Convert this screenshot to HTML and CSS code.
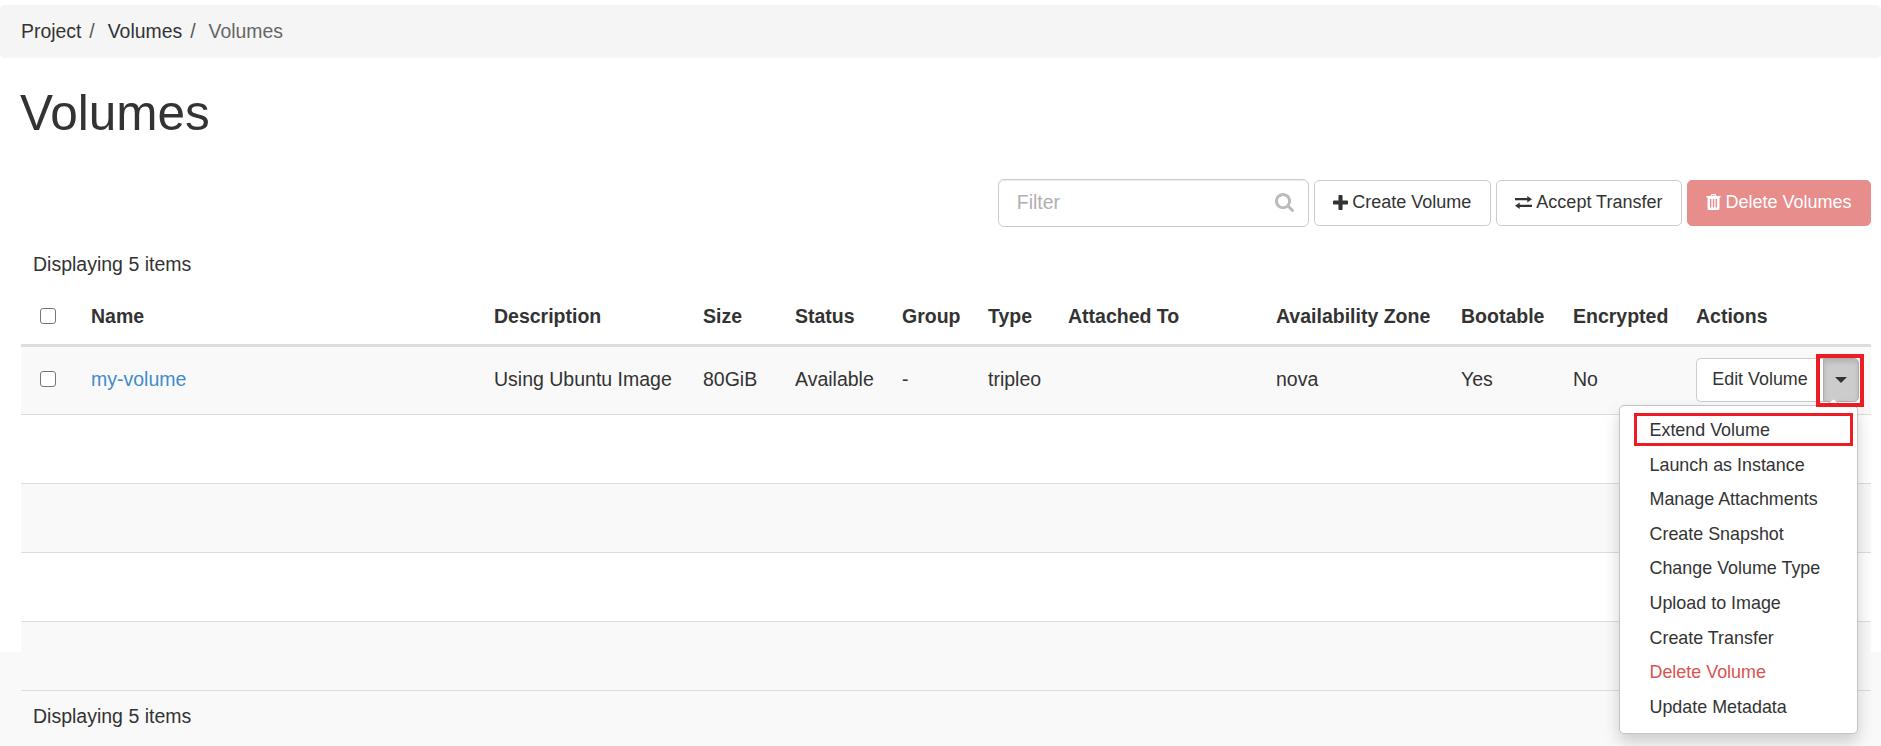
FILE: index.html
```html
<!DOCTYPE html>
<html lang="en">
<head>
  <meta charset="UTF-8">
  <title>Volumes</title>
  <link rel="stylesheet" href="styles.css">
</head>
<body>
  <div class="page">
    <ol class="breadcrumb">
      <li>Project</li>
      <li>Volumes</li>
      <li class="current">Volumes</li>
    </ol>

    <h1 class="page-title">Volumes</h1>

    <div class="toolbar">
      <div class="filter">
        <input class="filter-input" type="text" placeholder="Filter">
        <svg class="filter-icon" viewBox="0 0 1664 1664"><path d="M1152 704q0-185-131.500-316.500T704 256 387.500 387.500 256 704t131.500 316.500T704 1152t316.500-131.500T1152 704zm512 832q0 52-38 90t-90 38q-54 0-90-38l-343-342q-179 124-399 124-143 0-273.500-55.500t-225-150-150-225T0 704t55.500-273.500 150-225 225-150T704 0t273.500 55.500 225 150 150 225T1408 704q0 220-124 399l343 343q37 37 37 90z"/></svg>
      </div>
      <button class="btn">
        <svg class="icon" viewBox="0 0 1408 1408"><path d="M1408 608v192q0 40-28 68t-68 28H896v416q0 40-28 68t-68 28H608q-40 0-68-28t-28-68V896H96q-40 0-68-28T0 800V608q0-40 28-68t68-28h416V96q0-40 28-68t68-28h192q40 0 68 28t28 68v416h416q40 0 68 28t28 68z"/></svg>
        Create Volume
      </button>
      <button class="btn">
        <svg class="icon icon-wide" viewBox="0 0 18 14"><path d="M13 0l5 3.500L13 7V4.700H0V2.300h13zM5 7v2.300h13v2.400H5V14L0 10.500z"/></svg>
        Accept Transfer
      </button>
      <button class="btn btn-danger">
        <svg class="icon icon-trash" viewBox="0 0 14 16"><path fill-rule="evenodd" d="M5 0h4l1 2h4v1.500h-1V14.500q0 1.500-1.500 1.500h-9Q1 16 1 14.500V3.500H0V2h4zM5.300 2h3.400l-.5-.8H5.800zM3.500 5v8.500h1.400V5zm2.800 0v8.500h1.400V5zm2.800 0v8.500h1.400V5z"/></svg>
        Delete Volumes
      </button>
    </div>

    <table class="volumes">
      <colgroup>
        <col class="c-check"><col class="c-name"><col class="c-desc"><col class="c-size">
        <col class="c-status"><col class="c-group"><col class="c-type"><col class="c-attached">
        <col class="c-zone"><col class="c-boot"><col class="c-enc"><col class="c-actions">
      </colgroup>
      <thead>
        <tr class="count-row"><td colspan="12">Displaying 5 items</td></tr>
        <tr class="head-row">
          <th class="check-cell"><input class="check" type="checkbox"></th>
          <th>Name</th>
          <th>Description</th>
          <th>Size</th>
          <th>Status</th>
          <th>Group</th>
          <th>Type</th>
          <th>Attached To</th>
          <th>Availability Zone</th>
          <th>Bootable</th>
          <th>Encrypted</th>
          <th>Actions</th>
        </tr>
      </thead>
      <tbody>
        <tr class="row">
          <td class="check-cell"><input class="check" type="checkbox"></td>
          <td><a class="link" href="#">my-volume</a></td>
          <td>Using Ubuntu Image</td>
          <td>80GiB</td>
          <td>Available</td>
          <td>-</td>
          <td>tripleo</td>
          <td></td>
          <td>nova</td>
          <td>Yes</td>
          <td>No</td>
          <td>
            <div class="btn-group">
              <button class="btn btn-edit">Edit Volume</button>
              <button class="btn-toggle"><span class="caret"></span></button>
              <ul class="menu">
                <li class="picked">Extend Volume</li>
                <li>Launch as Instance</li>
                <li>Manage Attachments</li>
                <li>Create Snapshot</li>
                <li>Change Volume Type</li>
                <li>Upload to Image</li>
                <li>Create Transfer</li>
                <li class="danger">Delete Volume</li>
                <li>Update Metadata</li>
              </ul>
            </div>
          </td>
        </tr>
        <tr class="row"><td colspan="12"></td></tr>
        <tr class="row"><td colspan="12"></td></tr>
        <tr class="row"><td colspan="12"></td></tr>
        <tr class="row"><td colspan="12"></td></tr>
      </tbody>
      <tfoot>
        <tr class="foot-row"><td colspan="12">Displaying 5 items</td></tr>
      </tfoot>
    </table>
  </div>
</body>
</html>
```

FILE: styles.css
```css
/* Volumes panel */
*, *::before, *::after {
  box-sizing: border-box;
}
html, body {
  margin: 0;
  background-color: #f9f9f9;
}
body {
  font-family: "Liberation Sans", Arial, sans-serif;
  font-size: 19.5px;
  color: #333333;
  overflow: hidden;
  height: 746px;
}
.page {
  height: 652px;
  padding-top: 5px;
  background-color: #ffffff;
}

/* breadcrumb */
.breadcrumb {
  display: flex;
  align-items: center;
  height: 53px;
  margin: 0;
  padding: 0 0 0 21px;
  list-style: none;
  background-color: #f5f5f5;
  border-radius: 5px;
  font-size: 19.4px;
}
.breadcrumb li + li::before {
  content: "/";
  padding: 0 13px 0 8px;
  color: #555555;
}
.breadcrumb .current {
  color: #666666;
}

.page-title {
  margin: 0;
  padding: 26px 0 0 20px;
  height: 121px;
  font-size: 49.500px;
  font-weight: 400;
  line-height: 58px;
}

/* toolbar */
.toolbar {
  display: flex;
  align-items: center;
  justify-content: flex-end;
  gap: 5px;
  height: 48px;
  padding-right: 10px;
}
.filter {
  position: relative;
  width: 311px;
  height: 48px;
}
.filter-input {
  width: 100%;
  height: 100%;
  padding: 0 50px 2px 18px;
  border: 1px solid #cccccc;
  border-radius: 6px;
  box-shadow: inset 0 1px 1px rgba(0, 0, 0, .075);
  font-family: inherit;
  font-size: 19.5px;
  outline: none;
}
.filter-input::placeholder {
  color: #b0b0b0;
}
.filter-icon {
  position: absolute;
  top: 14px;
  right: 15px;
  width: 19px;
  height: 19px;
  fill: #bbbbbb;
}
.btn {
  display: inline-flex;
  align-items: center;
  justify-content: center;
  gap: 4px;
  height: 46px;
  padding: 0 18.500px 2px;
  background-color: #ffffff;
  border: 1px solid #cccccc;
  border-radius: 5px;
  color: #333333;
  font-family: inherit;
  font-size: 18px;
  white-space: nowrap;
  cursor: pointer;
}
.btn-danger {
  background-color: #e78d8b;
  border-color: #e78d8b;
  color: #ffffff;
}
.icon {
  width: 15px;
  height: 15px;
  fill: currentColor;
}
.icon-wide {
  width: 17px;
}
.icon-trash {
  height: 16px;
}

/* table */
.volumes {
  width: 1850px;
  margin: 0 0 0 21px;
  border-collapse: collapse;
  table-layout: fixed;
}
.c-check { width: 59px; }
.c-name { width: 403px; }
.c-desc { width: 209px; }
.c-size { width: 92px; }
.c-status { width: 107px; }
.c-group { width: 86px; }
.c-type { width: 80px; }
.c-attached { width: 208px; }
.c-zone { width: 185px; }
.c-boot { width: 112px; }
.c-enc { width: 123px; }
.c-actions { width: 186px; }
.volumes th,
.volumes td {
  padding: 0 0 0 11px;
  text-align: left;
  white-space: nowrap;
}
.volumes .check-cell {
  padding-left: 19px;
}
.volumes .count-row td {
  height: 63px;
  padding: 11px 0 0 12px;
}
.volumes .head-row th {
  height: 55px;
  padding-bottom: 1px;
  border-bottom: 3px solid #dddddd;
  font-weight: 700;
}
.volumes .row td {
  height: 69px;
  padding-bottom: 2px;
  border-bottom: 1px solid #dddddd;
}
.row:nth-child(odd) td {
  background-color: #f9f9f9;
}
.volumes .foot-row td {
  height: 56px;
  padding-left: 12px;
  padding-bottom: 3px;
  background-color: #f9f9f9;
}
.check {
  appearance: none;
  display: block;
  width: 16px;
  height: 16px;
  margin: 0;
  background-color: #ffffff;
  border: 1.5px solid #767676;
  border-radius: 3px;
}
.link {
  color: #428bca;
  text-decoration: none;
}

/* row actions */
.btn-group {
  position: relative;
  display: flex;
  width: 163px;
  margin-bottom: -2px;
}
.btn-edit {
  width: 127px;
  height: 44px;
  padding: 0 0 2px;
  border-right: 0;
  border-radius: 5px 0 0 5px;
  font-size: 17.9px;
}
.btn-toggle {
  position: relative;
  width: 36px;
  height: 44px;
  padding: 0;
  background-color: #cccccc;
  border: 1px solid #adadad;
  border-radius: 0 5px 5px 0;
  box-shadow: inset 0 3px 5px rgba(0, 0, 0, .125);
}
/* red annotation boxes from the screenshot */
.btn-toggle::after {
  content: "";
  position: absolute;
  z-index: 2;
  top: -5px;
  left: -8px;
  width: 48px;
  height: 53px;
  border: 4px solid #ed1c24;
}
.caret {
  display: block;
  width: 0;
  height: 0;
  margin: 0 auto;
  border-top: 6px solid #333333;
  border-left: 6px solid transparent;
  border-right: 6px solid transparent;
}
.menu {
  position: absolute;
  top: 47px;
  right: 1px;
  width: 239px;
  height: 329px;
  margin: 0;
  padding: 7px 0 0;
  list-style: none;
  background-color: #ffffff;
  border: 1px solid #c4c4c4;
  border-radius: 5px;
  box-shadow: 0 8px 16px rgba(0, 0, 0, .18);
  font-size: 17.9px;
}
/* little notch pointing at the toggle */
.menu::before {
  content: "";
  position: absolute;
  top: -6px;
  right: 18px;
  width: 11px;
  height: 11px;
  background-color: #ffffff;
  border-top: 1px solid #c4c4c4;
  border-left: 1px solid #c4c4c4;
  transform: rotate(45deg);
}
.menu li {
  position: relative;
  height: 34.600px;
  padding-left: 29.500px;
  line-height: 34.600px;
}
.menu .danger {
  color: #d9534f;
}
.menu .picked::after {
  content: "";
  position: absolute;
  top: 0;
  left: 14px;
  width: 219px;
  height: 33px;
  border: 3.500px solid #ed1c24;
}
```
